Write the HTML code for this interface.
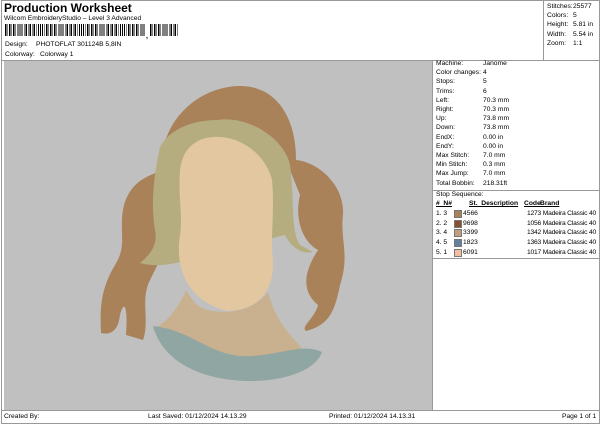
<!DOCTYPE html><html><head><style>
body{margin:0;width:600px;height:424px;background:#fff;font-family:"Liberation Sans",sans-serif;position:relative;overflow:hidden;color:#000}
.a{position:absolute;white-space:nowrap}
.s{font-size:6.7px}
.col{position:absolute;font-size:6.7px;line-height:9.2px;white-space:nowrap}
</style></head><body>
<div style="position:absolute;left:1px;top:0;width:597px;height:422px;border:1px solid #999"></div>
<div class="a" style="left:4px;top:1px;font-size:12px;font-weight:bold">Production Worksheet</div>
<div class="a s" style="left:4px;top:15px">Wilcom EmbroideryStudio – Level 3 Advanced</div>
<div class="a" style="left:5px;top:24px;width:140px;height:12px;background:repeating-linear-gradient(90deg,#000 0 1.3px,#fff 1.3px 2.4px,#000 2.4px 3px,#fff 3px 4.1px)"></div>
<div class="a" style="left:146px;top:33px;font-size:7px;font-weight:bold">,</div>
<div class="a" style="left:150px;top:24px;width:28px;height:12px;background:repeating-linear-gradient(90deg,#000 0 1.3px,#fff 1.3px 2.4px,#000 2.4px 3px,#fff 3px 4.1px)"></div>
<div class="a s" style="left:5px;top:41px">Design:</div><div class="a s" style="left:36px;top:41px">PHOTOFLAT 301124B 5,8IN</div>
<div class="a s" style="left:5px;top:51px">Colorway:</div><div class="a s" style="left:40px;top:51px">Colorway 1</div>
<div class="a" style="left:543px;top:1px;width:1px;height:59px;background:#999"></div>
<div class="a" style="left:2px;top:60px;width:597px;height:1px;background:#999"></div>
<div class="col" style="left:547px;top:2px">Stitches:<br>Colors:<br>Height:<br>Width:<br>Zoom:</div>
<div class="col" style="left:573px;top:2px">25577<br>5<br>5.81 in<br>5.54 in<br>1:1</div>
<div class="a" style="left:4px;top:61px;width:428px;height:349px;background:#c0c0c0;border-right:1px solid #999"></div>
<svg class="a" style="left:0;top:0" width="433" height="410" viewBox="0 0 433 410">
<path fill="#a9825a" d="M162,155 C168,112 205,86 240,86 C275,86 296,115 296,160 C318,162 345,185 343,215 C340,240 350,255 340,285 C335,310 330,325 306,331 C300,327 315,318 318,305 C300,290 305,270 318,250 C300,240 295,215 300,195 L290,170 Z"/>
<path fill="#a9825a" d="M158,172 C142,178 130,185 124,205 C118,230 128,245 115,265 C100,290 100,310 101,333 C110,335 118,332 120,315 C124,300 128,305 126,335 L143,340 C150,320 140,300 150,280 L160,260 Z"/>
<path fill="#b5ad80" d="M160,147 C170,128 195,120 217,120 C250,115 285,140 290,165 C295,200 290,230 300,245 L313,252 C300,255 290,245 285,235 L265,240 L180,262 C165,266 150,266 140,263 C150,255 158,245 155,230 C150,200 155,170 160,147 Z"/>
<path fill="#e2c7a1" d="M213,137 C195,138 182,150 180,170 C178,200 183,215 180,235 C175,265 185,300 227,311 C260,310 274,290 273,260 C270,240 275,210 272,180 C268,160 245,135 213,137 Z"/>
<path fill="#c9b08e" d="M186,290 C195,305 200,312 227,312 C250,310 262,300 268,292 C275,320 290,335 302,348 L240,370 L153,330 C170,320 180,305 186,290 Z"/>
<path fill="#8fa6a2" d="M153,326 C190,330 205,352 240,356 C275,358 300,342 322,352 C315,372 280,382 245,381 C200,379 163,362 153,326 Z"/>
</svg>
<div class="col" style="left:436px;top:59px">Machine:<br>Color changes:<br>Stops:<br>Trims:<br>Left:<br>Right:<br>Up:<br>Down:<br>EndX:<br>EndY:<br>Max Stitch:<br>Min Stitch:<br>Max Jump:<br>Total Bobbin:</div>
<div class="col" style="left:483px;top:59px">Janome<br>4<br>5<br>6<br>70.3 mm<br>70.3 mm<br>73.8 mm<br>73.8 mm<br>0.00 in<br>0.00 in<br>7.0 mm<br>0.3 mm<br>7.0 mm<br>218.31ft</div>
<div class="a" style="left:433px;top:190px;width:166px;height:1px;background:#999"></div>
<div class="a s" style="left:436px;top:191px">Stop Sequence:</div>
<div class="a s" style="left:436px;top:200px;font-weight:bold;text-decoration:underline">#&nbsp;&nbsp;N#</div>
<div class="a s" style="left:469px;top:200px;font-weight:bold;text-decoration:underline">St.&nbsp; Description</div>
<div class="a s" style="left:524px;top:200px;font-weight:bold;text-decoration:underline">Code</div>
<div class="a s" style="left:540px;top:200px;font-weight:bold;text-decoration:underline">Brand</div>
<div class="col" style="left:436px;top:209px;line-height:9.7px">1. 3<br>2. 2<br>3. 4<br>4. 5<br>5. 1</div>
<div class="a" style="left:454px;top:210px;width:6px;height:6px;background:#a9825a;border:1px solid #777"></div>
<div class="a" style="left:454px;top:219.7px;width:6px;height:6px;background:#8a5030;border:1px solid #777"></div>
<div class="a" style="left:454px;top:229.4px;width:6px;height:6px;background:#c0a080;border:1px solid #777"></div>
<div class="a" style="left:454px;top:239.1px;width:6px;height:6px;background:#6080a0;border:1px solid #777"></div>
<div class="a" style="left:454px;top:248.8px;width:6px;height:6px;background:#f0c0a0;border:1px solid #777"></div>
<div class="col" style="left:463px;top:209px;line-height:9.7px">4566<br>9698<br>3399<br>1823<br>6091</div>
<div class="col" style="left:527px;top:209px;line-height:9.7px;letter-spacing:-0.2px">1273 Madeira Classic 40<br>1056 Madeira Classic 40<br>1342 Madeira Classic 40<br>1363 Madeira Classic 40<br>1017 Madeira Classic 40</div>
<div class="a" style="left:433px;top:258px;width:166px;height:1px;background:#999"></div>
<div class="a" style="left:2px;top:410px;width:597px;height:1px;background:#999"></div>
<div class="a s" style="left:4px;top:413px">Created By:</div>
<div class="a s" style="left:148px;top:413px">Last Saved: 01/12/2024 14.13.29</div>
<div class="a s" style="left:329px;top:413px">Printed: 01/12/2024 14.13.31</div>
<div class="a s" style="left:562px;top:413px">Page 1 of 1</div>
</body></html>
